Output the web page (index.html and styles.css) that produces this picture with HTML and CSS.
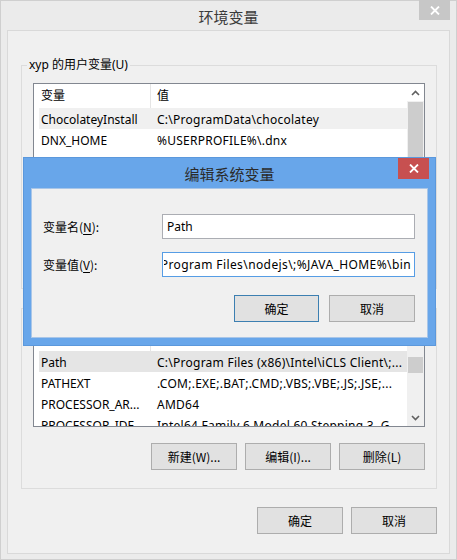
FILE: index.html
```html
<!DOCTYPE html>
<html lang="zh-CN">
<head>
<meta charset="utf-8">
<title>环境变量</title>
<link rel="stylesheet" href="styles.css">
</head>
<body>
<div class="win">
  <div class="titlebar">
    <span></span>
    <span class="title">环境变量</span>
    <div class="close close-inactive">
      <svg width="10" height="9" viewBox="0 0 10 9"><path d="M1 0.5 L9 8.5 M9 0.5 L1 8.5" stroke="#fff" stroke-width="1.8" fill="none"/></svg>
    </div>
  </div>
  <div class="client">
    <fieldset class="group">
      <legend>xyp 的用户变量(U)</legend>
      <div class="list list-user">
        <div class="list-body">
          <div class="list-head">
            <span class="hcell hname">变量</span>
            <span class="hcell">值</span>
          </div>
          <div class="row row-hover"><span class="cname">ChocolateyInstall</span><span class="cval">C:\ProgramData\chocolatey</span></div>
          <div class="row"><span class="cname">DNX_HOME</span><span class="cval">%USERPROFILE%\.dnx</span></div>
        </div>
        <div class="sbar">
          <div class="sbtn"><svg width="9" height="6" viewBox="0 0 9 6"><path d="M1 5 L4.5 1.5 L8 5" stroke="#606060" stroke-width="1.6" fill="none"/></svg></div>
          <div class="strack"><div class="thumb thumb-user"></div></div>
          <div class="sbtn"><svg width="9" height="6" viewBox="0 0 9 6"><path d="M1 1 L4.5 4.5 L8 1" stroke="#606060" stroke-width="1.6" fill="none"/></svg></div>
        </div>
      </div>
      <div class="btnrow">
        <button class="btn">新建(N)...</button>
        <button class="btn">编辑(E)...</button>
        <button class="btn">删除(D)</button>
      </div>
    </fieldset>

    <fieldset class="group group-sys">
      <legend>系统变量(S)</legend>
      <div class="list list-sys">
        <div class="list-body">
          <div class="list-head">
            <span class="hcell hname">变量</span>
            <span class="hcell">值</span>
          </div>
          <div class="row row-sel"><span class="cname">Path</span><span class="cval">C:\Program Files (x86)\Intel\iCLS Client\;...</span></div>
          <div class="row"><span class="cname">PATHEXT</span><span class="cval">.COM;.EXE;.BAT;.CMD;.VBS;.VBE;.JS;.JSE;...</span></div>
          <div class="row"><span class="cname">PROCESSOR_AR...</span><span class="cval">AMD64</span></div>
          <div class="row"><span class="cname">PROCESSOR_IDE...</span><span class="cval">Intel64 Family 6 Model 60 Stepping 3, G...</span></div>
        </div>
        <div class="sbar">
          <div class="sbtn"><svg width="9" height="6" viewBox="0 0 9 6"><path d="M1 5 L4.5 1.5 L8 5" stroke="#606060" stroke-width="1.6" fill="none"/></svg></div>
          <div class="strack strack-sys"><div class="thumb thumb-sys"></div></div>
          <div class="sbtn"><svg width="9" height="6" viewBox="0 0 9 6"><path d="M1 1 L4.5 4.5 L8 1" stroke="#606060" stroke-width="1.6" fill="none"/></svg></div>
        </div>
      </div>
      <div class="btnrow">
        <button class="btn">新建(W)...</button>
        <button class="btn">编辑(I)...</button>
        <button class="btn">删除(L)</button>
      </div>
    </fieldset>

    <div class="btnrow btnrow-main">
      <button class="btn">确定</button>
      <button class="btn">取消</button>
    </div>
  </div>

  <div class="dialog">
    <div class="titlebar dlg-titlebar">
      <span></span>
      <span class="title">编辑系统变量</span>
      <div class="close close-active">
        <svg width="10" height="9" viewBox="0 0 10 9"><path d="M1 0.5 L9 8.5 M9 0.5 L1 8.5" stroke="#fff" stroke-width="1.8" fill="none"/></svg>
      </div>
    </div>
    <div class="dlg-client">
      <div class="form">
        <label class="flabel">变量名(<u>N</u>):</label>
        <div class="input"><span class="itext">Path</span></div>
        <label class="flabel">变量值(<u>V</u>):</label>
        <div class="input input-focus"><div class="iscroll"><span class="itext itext-long">C:\Program Files (x86)\Skype\Phone\;C:\Program Files\nodejs\;%JAVA_HOME%\bin</span></div></div>
      </div>
      <div class="btnrow btnrow-dlg">
        <button class="btn btn-default">确定</button>
        <button class="btn">取消</button>
      </div>
    </div>
  </div>
</div>
</body>
</html>
```

FILE: styles.css
```css
* { box-sizing: border-box; }
html, body { margin: 0; padding: 0; }
body {
  font-family: "Noto Sans", "Noto Sans CJK SC", sans-serif;
  font-size: 12px;
  color: #000;
  background: #ebebeb;
}
.win {
  position: relative;
  width: 457px;
  height: 560px;
  background: #ebebeb;
  border: 1px solid #cfcfcf;
  padding: 0 6px 5px 6px;
  display: flex;
  flex-direction: column;
}
.titlebar {
  height: 29px;
  display: grid;
  grid-template-columns: 1fr auto 1fr;
  align-items: start;
}
.title {
  font-size: 15px;
  line-height: 20px;
  margin-top: 6px;
  color: #3a3a3a;
  font-family: "Noto Sans CJK SC", sans-serif;
}
.close {
  justify-self: end;
  width: 31px;
  height: 20px;
  display: flex;
  align-items: center;
  justify-content: center;
}
.close-inactive {
  background: #c7c7c7;
  margin-top: -1px;
}
.client {
  flex: 1;
  background: #f0f0f0;
  border: 1px solid #d9d9d9;
  display: flex;
  flex-direction: column;
}
.group {
  margin: 26px 12px 0 13px;
  padding: 10px 11px 18px 11px;
  border: 1px solid #dcdcdc;
  min-width: 0;
}
.group legend {
  margin-left: -6px;
  padding: 0 2px;
  line-height: 16px;
  font-size: 12px;
}
.group-sys { margin-top: 11px; }
.list {
  background: #fff;
  border: 1px solid #828790;
  display: flex;
  overflow: hidden;
}
.list-user { height: 144px; }
.list-sys { height: 101px; }
.list-body {
  flex: 1;
  min-width: 0;
  overflow: hidden;
}
.list-head {
  height: 24px;
  display: grid;
  grid-template-columns: 117px 1fr;
  align-items: stretch;
}
.hcell {
  line-height: 24px;
  padding-left: 6px;
}
.hname {
  padding-left: 7px;
  border-right: 1px solid #e5e5e5;
}
.row {
  height: 21px;
  margin-left: 5px;
  display: grid;
  grid-template-columns: 112px 1fr;
  line-height: 20px;
  padding-top: 2px;
  white-space: nowrap;
}
.row-hover { background: #f0f0f0; }
.row-sel { background: #e5e5e5; }
.cname { padding-left: 2px; overflow: hidden; }
.cval { padding-left: 6px; overflow: hidden; letter-spacing: 0.25px; }
.sbar {
  width: 17px;
  flex: none;
  display: flex;
  flex-direction: column;
  background: #f0f0f0;
}
.sbtn {
  height: 17px;
  flex: none;
  display: flex;
  align-items: center;
  justify-content: center;
  background: #f0f0f0;
}
.list-user .sbtn:first-child { background: #fff; }
.strack {
  flex: 1;
  padding: 1px 1px;
}
.thumb { background: #cdcdcd; }
.thumb-user { height: 100%; }
.strack-sys { padding-top: 13px; }
.thumb-sys { height: 16px; }
.btnrow {
  display: flex;
  justify-content: flex-end;
  gap: 8px;
  margin-top: 16px;
}
.btn {
  width: 86px;
  height: 27px;
  background: #e1e1e1;
  border: 1px solid #adadad;
  font-family: "Noto Sans CJK SC", "Noto Sans", sans-serif;
  font-size: 12px;
  color: #000;
  padding: 0;
  border-radius: 0;
}
.btnrow-main {
  margin: 18px 12px 0 0;
}
.dialog {
  position: absolute;
  left: 22px;
  top: 156px;
  width: 413px;
  height: 189px;
  background: #68a6ea;
  border: 1px solid #5b98dc;
  display: flex;
  flex-direction: column;
}
.dlg-titlebar {
  height: 30px;
  flex: none;
}
.dlg-titlebar .title { margin-top: 6px; color: #2b2b2b; }
.close-active {
  background: #c75050;
  margin-right: 6px;
  height: 21px;
}
.dlg-client {
  flex: 1;
  margin: 0 7px 7px 7px;
  background: #f0f0f0;
  border: 1px solid #a9c6e8;
  padding: 25px 12px 15px 11px;
  display: flex;
  flex-direction: column;
}
.form {
  display: grid;
  grid-template-columns: 119px 253px;
  row-gap: 13px;
  align-items: center;
}
.flabel {
  font-family: "Noto Sans CJK SC", "Noto Sans", sans-serif;
  font-size: 12px;
}
.flabel u { text-decoration-thickness: 1px; text-underline-offset: 2px; }
.input {
  height: 25px;
  background: #fff;
  border: 1px solid #abadb3;
  display: flex;
  align-items: center;
  padding: 0 3px 0 4px;
  overflow: hidden;
}
.input-focus { border-color: #569de5; padding-left: 1px; }
.iscroll {
  flex: 1;
  min-width: 0;
  overflow: hidden;
  display: flex;
  justify-content: flex-end;
}
.itext { white-space: nowrap; flex: none; }
.itext-long { letter-spacing: 0.4px; }
.btnrow-dlg {
  margin-top: 18px;
  gap: 10px;
}
.btn-default {
  border-color: #3c7fb1;
  width: 85px;
}
```
